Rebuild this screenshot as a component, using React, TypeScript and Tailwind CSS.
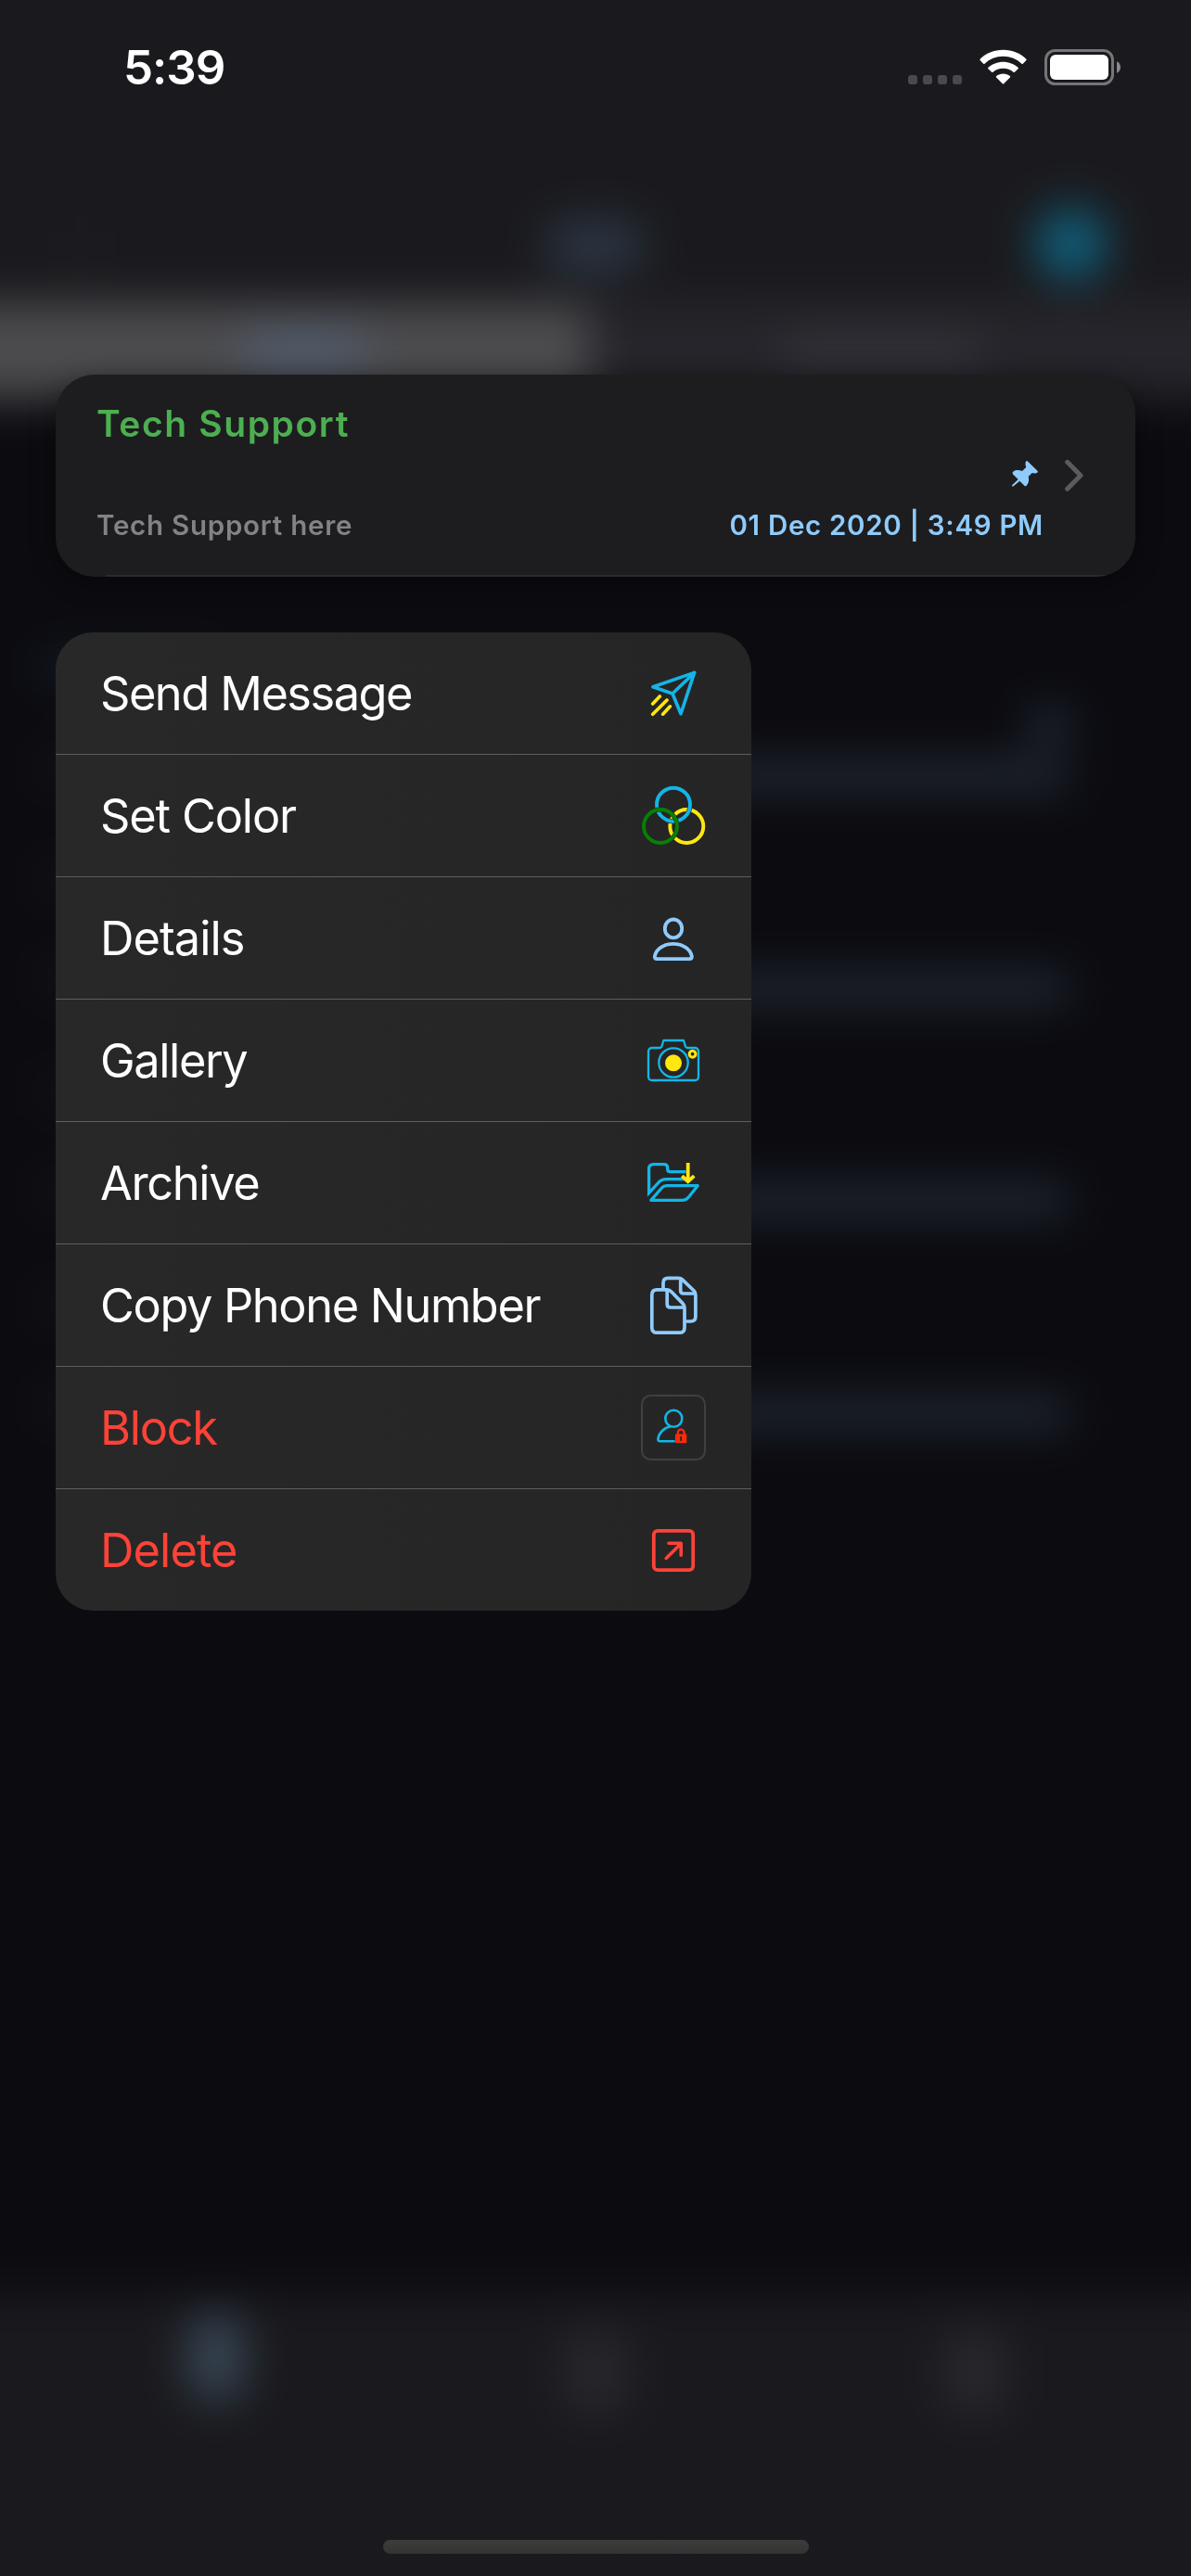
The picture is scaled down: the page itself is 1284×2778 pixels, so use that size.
import type { ReactNode } from 'react';

const CYAN = '#14b5e6';
const YELLOW = '#ffe70f';
const SKY = '#8fcbfc';
const RED = '#fd4238';
const PANEL = '#262626';

function Glyph({ children }: { children: ReactNode }) {
  return (
    <svg width="80" height="80" viewBox="0 0 80 80" fill="none" strokeLinecap="round" strokeLinejoin="round" className="block shrink-0">
      {children}
    </svg>
  );
}

const SendIcon = () => (
  <Glyph>
    <g stroke={CYAN} strokeWidth="3.6">
      <path d="M17.9 32.8 62.6 17.4 48 61.8 39 40Z" />
      <path d="M39 40 62.6 17.4" />
    </g>
    <path d="M25.3 43 17.7 51M33 47 17.7 62.3M36.4 53.8 28.6 62.2" stroke={YELLOW} strokeWidth="3.6" />
  </Glyph>
);

const ColorIcon = () => (
  <Glyph>
    <circle cx="54.3" cy="51" r="18" stroke={YELLOW} strokeWidth="3.9" />
    <circle cx="40" cy="27.7" r="18" stroke={PANEL} strokeWidth="5.2" />
    <circle cx="40" cy="27.7" r="18" stroke={CYAN} strokeWidth="3.9" />
    <circle cx="26" cy="51" r="18" stroke={PANEL} strokeWidth="4.8" />
    <circle cx="26" cy="51" r="18" stroke="#068006" strokeWidth="3.9" />
  </Glyph>
);

const PersonIcon = () => (
  <Glyph>
    <g stroke={SKY} strokeWidth="3.8">
      <ellipse cx="40" cy="29.4" rx="9.2" ry="9.9" />
      <path d="M22.5 62.2H57.2Q59.9 62.2 59.9 59.6C58.6 51.2 49.6 45.8 39.8 45.8S21 51.2 19.8 59.6Q19.8 62.2 22.5 62.2Z" />
    </g>
  </Glyph>
);

const CameraIcon = () => (
  <Glyph>
    <g stroke={CYAN} strokeWidth="2.3">
      <path d="M17.5 26H25Q27 26 27.6 24L29.4 18H51L52.8 24Q53.4 26 55.6 26H62.5Q67 26 67 30.5V57Q67 61 63 61H17Q13 61 13 57V30.5Q13 26 17.5 26Z" />
      <circle cx="40" cy="42" r="15.7" />
    </g>
    <circle cx="40" cy="42.3" r="9" fill={YELLOW} />
    <circle cx="60.6" cy="32.7" r="3.4" stroke={YELLOW} strokeWidth="3.1" />
  </Glyph>
);

const ArchiveIcon = () => (
  <Glyph>
    <g stroke={CYAN} strokeWidth="3.3" strokeLinecap="butt">
      <path d="M53.5 27.7H36.5Q33.7 27.7 33.7 25V23.6Q33.7 19.7 29.8 19.7H18.5Q13.6 19.7 13.6 24.6V50.5L23.4 39.8Q27 35.7 32 35.7H52.5" strokeLinejoin="miter" />
      <path d="M15.8 58.3 27.5 45Q29.6 42.7 32.6 42.7H66.2L56.4 55Q53.6 58.3 49.8 58.3Z" />
    </g>
    <path d="M55.7 18V36.5M49.3 32.2 55.7 38.2 62.3 32.2" stroke={YELLOW} strokeWidth="3.8" strokeLinecap="butt" strokeLinejoin="miter" />
  </Glyph>
);

const CopyIcon = () => (
  <Glyph>
    <g stroke={SKY} strokeWidth="3.7">
      <path d="M33.2 22.8H22.3Q16.8 22.8 16.8 28.3V63.7Q16.8 69.2 22.3 69.2H46.5Q52 69.2 52 63.7V42.5Q52 39.6 49.8 37.4L38 25.2Q35.8 22.8 33.2 22.8V38.3Q33.2 42 36.9 42H51.5" />
      <path d="M29 21.5V15.5Q29 10.3 34.2 10.3H45.5Q48 10.3 49.8 12.1L62.2 24Q63.9 25.7 63.9 28.2V51.8Q63.9 57 58.7 57H54.5M47.7 11V23.8Q47.7 27 50.9 27H63.4" />
    </g>
  </Glyph>
);

const BlockIcon = () => (
  <Glyph>
    <rect x="6" y="5" width="68" height="69" rx="9.5" stroke="#404040" strokeWidth="2" />
    <g stroke={CYAN} strokeWidth="2.6">
      <circle cx="40.3" cy="29.7" r="9" />
      <path d="M37.2 38.3C29.8 39.6 24 45.6 23.4 52Q23.4 54.3 25.6 54.3H40.6" />
    </g>
    <path d="M44.8 47.5V45a3.4 3.4 0 0 1 6.8 0V47.5" stroke="#fb2b09" strokeWidth="2.3" />
    <rect x="42" y="46.5" width="12.3" height="9.7" rx="0.6" fill="#fb2b09" />
    <path d="M48.1 49.7V53.2" stroke={PANEL} strokeWidth="1.8" />
  </Glyph>
);

const DeleteIcon = () => (
  <Glyph>
    <rect x="18.8" y="18.8" width="42.4" height="42.4" rx="4.2" stroke={RED} strokeWidth="3.8" />
    <path d="M32.2 48.4 48.2 32.4M35 32.2H48.2V45.3" stroke={RED} strokeWidth="3.6" />
  </Glyph>
);

type Item = { label: string; icon: ReactNode; tracking: string; danger?: boolean };

const items: Item[] = [
  { label: 'Send Message', icon: <SendIcon />, tracking: 'tracking-[-1.5px]' },
  { label: 'Set Color', icon: <ColorIcon />, tracking: 'tracking-[-1.15px]' },
  { label: 'Details', icon: <PersonIcon />, tracking: 'tracking-[-0.95px]' },
  { label: 'Gallery', icon: <CameraIcon />, tracking: 'tracking-[-1.4px]' },
  { label: 'Archive', icon: <ArchiveIcon />, tracking: 'tracking-[-1.35px]' },
  { label: 'Copy Phone Number', icon: <CopyIcon />, tracking: 'tracking-[-1.35px]' },
  { label: 'Block', icon: <BlockIcon />, tracking: 'tracking-[-1.3px]', danger: true },
  { label: 'Delete', icon: <DeleteIcon />, tracking: 'tracking-[-0.9px]', danger: true },
];

/* Blurred chat list behind the context menu; it bleeds past the screen so the blur has no visible edge. */
function Backdrop() {
  return (
    <div className="absolute -inset-24 flex flex-col bg-[#0b0b10] blur-[24px]" aria-hidden="true">
      <div className="grid h-[423px] shrink-0 grid-cols-3 items-end bg-[#1a1a1e] px-24 pb-[26px]">
        <i className="mb-[14px] ml-[76px] h-[40px] w-[24px] bg-[#1e1e22]" />
        <i className="mb-[12px] h-[48px] w-[104px] justify-self-center rounded-full bg-[#2e3a49]" />
        <i className="mr-[91px] size-[76px] justify-self-end rounded-full bg-[#10617e]" />
      </div>
      <div className="flex h-[104px] shrink-0">
        <div className="flex w-[732px] items-center justify-center bg-[#4c4c4f] pl-[116px]">
          <i className="h-[34px] w-[120px] bg-[#526175]" />
        </div>
        <div className="flex flex-1 items-center justify-center bg-[#26252b] pr-[116px]">
          <i className="h-[34px] w-[210px] bg-[#35343a]" />
        </div>
      </div>
      <div className="flex flex-1 flex-col px-24 pt-[243px]">
        {[0, 1, 2, 3].map((row) => (
          <div key={row} className="flex h-[229px] justify-between pl-[40px] pr-[132px]">
            <div className="flex flex-col gap-[84px] pt-[32px]">
              <i className={`h-[26px] w-[200px] ${row === 0 ? 'bg-[#18202c]' : 'bg-[#141519]'}`} />
              <i className="h-[22px] w-[200px] bg-[#18181b]" />
            </div>
            <div className="flex flex-col items-end gap-[20px] pt-[90px]">
              <i className={`h-[36px] w-[40px] ${row === 0 ? 'bg-[#262f3d]' : ''}`} />
              <i className="h-[34px] w-[380px] bg-[#222935]" />
            </div>
          </div>
        ))}
      </div>
      <div className="grid h-[400px] shrink-0 grid-cols-3 justify-items-center bg-[#1a1a1e] px-[122px] pt-[22px]">
        <i className="ml-[4px] h-[92px] w-[58px] rounded-3xl bg-[#394857]" />
        <i className="mt-[18px] h-[88px] w-[68px] rounded-3xl bg-[#28272d]" />
        <i className="mr-[4px] mt-[18px] h-[88px] w-[68px] rounded-3xl bg-[#29282d]" />
      </div>
    </div>
  );
}

function StatusBar() {
  return (
    <header className="flex h-[146px] items-start pl-[133px] pr-[76px] pt-[53px]">
      <div className="-mt-[10px] text-[51px] font-semibold leading-[60px] tracking-[-1px] text-white">5:39</div>
      <div className="ml-auto flex h-[39px] items-end">
        <div className="mb-[1px] flex gap-[6px]">
          <i className="size-[10px] rounded-[3px] bg-[#4a4a4d]" />
          <i className="size-[10px] rounded-[3px] bg-[#4a4a4d]" />
          <i className="size-[10px] rounded-[3px] bg-[#4a4a4d]" />
          <i className="size-[10px] rounded-[3px] bg-[#4a4a4d]" />
        </div>
        <svg width="51" height="38" viewBox="0 0 51 38" fill="#fff" className="mb-[1px] ml-[19px] block">
          <path d="M25.5 0.8C35.4 0.8 44.3 4.5 50.4 10.7Q51 11.4 50.4 12.1L46.8 15.7Q46.1 16.3 45.4 15.7C40.2 10.7 33.2 7.8 25.5 7.8S10.8 10.7 5.6 15.7Q4.9 16.3 4.2 15.7L0.6 12.1Q0 11.4 0.6 10.7C6.7 4.5 15.6 0.8 25.5 0.8Z" />
          <path d="M25.5 13.7C31.7 13.7 37.4 16 41.6 19.8Q42.3 20.5 41.6 21.2L37.9 24.8Q37.2 25.4 36.5 24.8C33.6 22.2 29.7 20.7 25.5 20.7S17.4 22.2 14.5 24.8Q13.8 25.4 13.1 24.8L9.4 21.2Q8.7 20.5 9.4 19.8C13.6 16 19.3 13.7 25.5 13.7Z" />
          <path d="M25.5 26.6C28.3 26.6 30.9 27.5 32.9 29.1Q33.6 29.8 32.9 30.5L26.2 37.2Q25.5 37.8 24.8 37.2L18.1 30.5Q17.4 29.8 18.1 29.1C20.1 27.5 22.7 26.6 25.5 26.6Z" />
        </svg>
        <svg width="82" height="39" viewBox="0 0 82 39" className="ml-[19px] block">
          <rect x="1.5" y="1.5" width="72" height="36" rx="10" fill="none" stroke="#767679" strokeWidth="3" />
          <rect x="6" y="6" width="63" height="27" rx="6" fill="#fff" />
          <path d="M78 13.3C80.5 14.3 82 16.7 82 19.5S80.5 24.7 78 25.7Z" fill="#8a8a8c" />
        </svg>
      </div>
    </header>
  );
}

function PreviewCard() {
  return (
    <section className="flex h-[218px] overflow-hidden rounded-[42px] bg-[#1d1d1f]">
      <div className="flex flex-1 flex-col pl-[44px] pt-[29px]">
        <h1 className="text-[39px] font-semibold leading-[48px] tracking-[1.6px] text-[#4caf50]">Tech Support</h1>
        <p className="mt-[66px] text-[29.5px] font-semibold leading-[38px] tracking-[0.75px] text-[#838383]">Tech Support here</p>
        <div className="ml-[10px] mt-auto h-[2px] bg-[#2b2b2d]" />
      </div>
      <div className="flex flex-col items-end pt-[93px]">
        <svg width="28" height="28" viewBox="0 0 84 84" fill={SKY} className="mr-[29px] block">
          <path d="M1 83 0 79 20 60 4 44Q0 40 3 36C9 29 22 29 33 33L46 20C42 12 43 5 46 1Q48-1 50 1L83 33Q84 36 82 38C78 41 71 41 65 39L53 51C56 62 54 73 47 80Q43 83 40 80L25 65 5 82Z" />
        </svg>
        <p className="mr-[23px] mt-[22px] whitespace-nowrap text-[29.5px] font-semibold leading-[38px] tracking-[0.68px] text-[#8fcbfc]">01 Dec 2020 | 3:49 PM</p>
        <div className="mt-auto h-[2px] w-full bg-[#2b2b2d]" />
      </div>
      <div className="flex w-[76px] flex-col justify-between pt-[91px]">
        <svg width="20" height="36" viewBox="0 0 20 36" fill="none" stroke="#5b5b5f" strokeWidth="5" strokeLinecap="round" strokeLinejoin="round" className="block">
          <path d="M2.7 3.3 17 17.7 2.7 32.2" />
        </svg>
        <div className="h-[2px] w-full bg-[#2b2b2d]" />
      </div>
    </section>
  );
}

function ContextMenu() {
  return (
    <ul className="w-[750px] overflow-hidden rounded-[40px] bg-linear-to-r from-[#282828] to-[#252525]">
      {items.map(({ label, icon, tracking, danger }) => (
        <li key={label} className="flex h-[132px] items-center justify-between border-b border-[#5e5e5e] pl-[48px] pr-[44px] last:h-[131px] last:border-b-0">
          <span className={`whitespace-nowrap text-[50.5px] leading-[64px] ${tracking} ${danger ? 'text-[#fd4238]' : 'text-white'}`}>{label}</span>
          {icon}
        </li>
      ))}
    </ul>
  );
}

export default function App() {
  return (
    <main className="relative h-[2778px] w-[1284px] overflow-hidden font-['Inter',sans-serif]">
      <Backdrop />
      <div className="relative flex h-full flex-col pb-[24px]">
        <StatusBar />
        <div className="flex flex-1 flex-col gap-[60px] px-[60px] pt-[258px]">
          <div className="[filter:drop-shadow(0_4px_14px_rgba(0,0,0,0.35))]">
            <PreviewCard />
          </div>
          <ContextMenu />
        </div>
        <div className="h-[15px] w-[459px] self-center rounded-full bg-linear-to-b from-[#3c3c3b] to-[#343434]" />
      </div>
    </main>
  );
}
